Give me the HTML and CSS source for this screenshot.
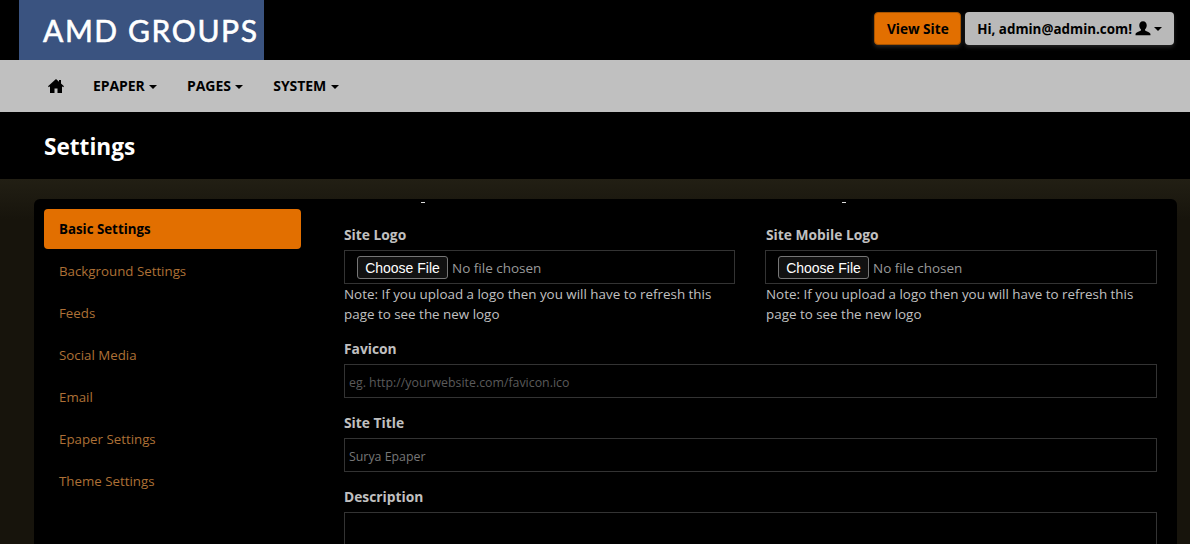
FILE: index.html
```html
<!DOCTYPE html>
<html lang="en">
<head>
    <meta charset="UTF-8">
    <meta name="viewport" content="width=device-width, initial-scale=1.0">
    <title>Settings</title>
    <link rel="stylesheet" href="styles.css">
</head>
<body>
    <div class="topbar">
        <div class="logo">AMD GROUPS</div>
        <div class="top-actions">
            <button class="btn btn-orange">View Site</button>
            <button class="btn btn-grey">Hi, admin@admin.com!
                <svg class="user-icon" viewBox="0.5 1 15 14.500"><path d="M8 1c-2.200 0-3.500 1.600-3.500 3.800 0 1.500.6 2.900 1.500 3.700.3.300.3.900 0 1.200-.6.700-4.500 1.500-5 3.300v1h14v-1c-.5-1.800-4.400-2.600-5-3.300-.3-.3-.3-.9 0-1.200.9-.8 1.500-2.200 1.500-3.700C11.500 2.600 10.200 1 8 1z"/></svg>
                <span class="caret"></span>
            </button>
        </div>
    </div>
    <div class="navbar">
        <svg class="home-icon" viewBox="0 0 16 16"><path d="M8 1 0 8.300l.9.900L2 8.300V15h4.500v-4.500h3V15H14V8.300l1.100.9.900-.9-3-2.700V2h-2v1.800z"/></svg>
        <a class="nav-link">EPAPER <span class="caret"></span></a>
        <a class="nav-link">PAGES <span class="caret"></span></a>
        <a class="nav-link">SYSTEM <span class="caret"></span></a>
    </div>
    <div class="page-title"><h1>Settings</h1></div>
    <div class="content">
        <div class="card">
            <div class="side-menu">
                <a class="side-link active">Basic Settings</a>
                <a class="side-link">Background Settings</a>
                <a class="side-link">Feeds</a>
                <a class="side-link">Social Media</a>
                <a class="side-link">Email</a>
                <a class="side-link">Epaper Settings</a>
                <a class="side-link">Theme Settings</a>
            </div>
            <div class="form">
                <div class="clipped-marks"><i></i><i></i></div>
                <div class="two-col">
                    <div class="field">
                        <label>Site Logo</label>
                        <div class="file-box"><input type="file"></div>
                        <p class="note">Note: If you upload a logo then you will have to refresh this page to see the new logo</p>
                    </div>
                    <div class="field field-right">
                        <label>Site Mobile Logo</label>
                        <div class="file-box"><input type="file"></div>
                        <p class="note">Note: If you upload a logo then you will have to refresh this page to see the new logo</p>
                    </div>
                </div>
                <div class="field">
                    <label>Favicon</label>
                    <input class="text-input" type="text" placeholder="eg. http://yourwebsite.com/favicon.ico">
                </div>
                <div class="field">
                    <label>Site Title</label>
                    <input class="text-input" type="text" value="Surya Epaper">
                </div>
                <div class="field">
                    <label>Description</label>
                    <textarea class="text-input text-area"></textarea>
                </div>
            </div>
        </div>
    </div>
</body>
</html>
```

FILE: styles.css
```css
html, body {
    height: 544px;
    overflow: hidden;
}
body {
    margin: 0;
    background-color: #000;
    color: #c0c0c0;
    font-family: "Open Sans", "Noto Sans", sans-serif;
    font-size: 13.3px;
}
.topbar {
    height: 60px;
    display: flex;
    justify-content: space-between;
    padding: 0 16px 0 19px;
}
.logo {
    width: 245px;
    box-sizing: border-box;
    padding-left: 24px;
    background-color: #3a5380;
    color: #fff;
    font-family: Lato, sans-serif;
    font-size: 30px;
    letter-spacing: 1.6px;
    line-height: 61px;
    white-space: nowrap;
    -webkit-text-stroke: 0.6px #fff;
}
.top-actions {
    display: flex;
    align-items: center;
    gap: 4px;
    padding-bottom: 3px;
}
.btn {
    height: 33px;
    padding: 0 12px;
    border: 1px solid transparent;
    border-radius: 4px;
    font: 700 13.4px "Open Sans", sans-serif;
    color: #000;
    box-shadow: 0 2px 4px rgba(255, 255, 255, 0.15);
    display: flex;
    align-items: center;
}
.btn-orange {
    font-size: 13.6px;
    padding: 0 11.5px;
    background-color: #e26f00;
    border-color: #a85400;
}
.btn-grey {
    padding: 0 11px;
    background-color: #b9b9b9;
}
.user-icon {
    width: 16px;
    height: 16px;
    margin: 0 3px;
}
.caret {
    display: inline-block;
    width: 0;
    height: 0;
    vertical-align: middle;
    border-top: 4px solid #000;
    border-left: 4px solid transparent;
    border-right: 4px solid transparent;
}
.navbar {
    height: 52px;
    background-color: #c0c0c0;
    display: flex;
    align-items: center;
    padding-left: 48px;
}
.home-icon {
    width: 16px;
    height: 16px;
    margin-right: 29px;
}
.nav-link {
    margin: 0 30px 2px 0;
    font-weight: 700;
    font-size: 14px;
    letter-spacing: -0.1px;
    color: #000;
}
.nav-link .caret {
    margin-left: 1px;
}
.page-title {
    height: 67px;
    box-sizing: border-box;
    padding: 2px 0 0 44px;
    display: flex;
    align-items: center;
}
.page-title h1 {
    margin: 0;
    color: #fff;
    font-size: 22.6px;
    font-weight: 700;
}
.content {
    height: 365px;
    box-sizing: border-box;
    padding: 20px 13px 0 34px;
    background: linear-gradient(#221f14, #17140c 40px);
}
.card {
    height: 400px;
    background-color: #000;
    border-radius: 6px;
    display: flex;
}
.side-menu {
    width: 257px;
    margin: 10px 0 0 10px;
    display: flex;
    flex-direction: column;
    gap: 2px;
}
.side-link {
    height: 40px;
    line-height: 40px;
    padding-left: 15px;
    border-radius: 4px;
    color: #ad7036;
}
.side-link.active {
    background-color: #e26f00;
    color: #000;
    font-weight: 700;
}
.form {
    width: 813px;
    margin-left: 43px;
}
.clipped-marks {
    height: 26px;
    display: grid;
    grid-template-columns: repeat(2, 421px);
}
.clipped-marks i {
    display: block;
    width: 4px;
    height: 1px;
    margin: 3px 0 0 77px;
    background-color: #ddd;
}
.two-col {
    display: grid;
    grid-template-columns: 391px 392px;
    gap: 30px;
}
.field {
    margin-bottom: 15px;
}
.field label {
    display: block;
    height: 25px;
    line-height: 20px;
    font-size: 13.8px;
    font-weight: 700;
}
.field-right label, .field-right .note {
    margin-left: 1px;
}
.file-box {
    height: 32px;
    border: 1px solid #333;
    display: flex;
    align-items: center;
    padding-left: 12px;
}
.file-box input {
    font: 13.5px "Open Sans", sans-serif;
    color: #999;
}
.file-box input::file-selector-button {
    width: 91px;
    height: 23px;
    margin: 1px 4px 0 0;
    padding: 0;
    background-color: #111;
    border: 1px solid #767676;
    border-radius: 3px;
    color: #fff;
    font: 14px "Liberation Sans", sans-serif;
}
.note {
    margin: 0;
    line-height: 20px;
    font-size: 13.4px;
}
.text-input {
    display: block;
    width: 100%;
    height: 34px;
    box-sizing: border-box;
    padding: 2px 4px 0;
    background-color: #000;
    border: 1px solid #333;
    color: #777;
    font: 12.35px "Open Sans", sans-serif;
    outline: none;
}
.text-input::placeholder {
    color: #5a5a5a;
}
.text-area {
    height: 100px;
    resize: none;
}
```
